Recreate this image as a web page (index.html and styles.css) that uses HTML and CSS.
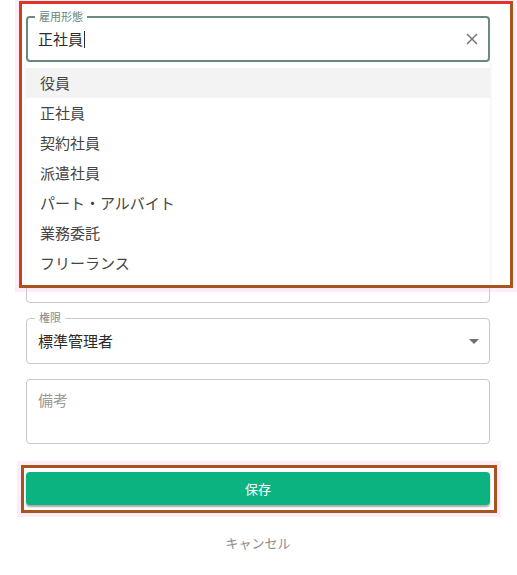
FILE: index.html
```html
<!DOCTYPE html>
<html lang="ja">
<head>
<meta charset="utf-8">
<title>雇用形態</title>
<link rel="stylesheet" href="styles.css">
</head>
<body>
<div class="page">
  <div class="fields">
    <div class="field focused">
      <span class="label label-focused">雇用形態</span>
      <span class="value">正社員</span><span class="caret"></span>
      <span class="spacer"></span>
      <svg class="clear" width="12" height="12" viewBox="0 0 12 12"><path d="M1 1 L11 11 M11 1 L1 11" stroke="#6f6f6f" stroke-width="1.4" fill="none"/></svg>
    </div>
    <div class="field plain"></div>
    <div class="field plain"></div>
    <div class="field plain"></div>
    <div class="field plain tall"></div>
    <div class="field select">
      <span class="label">権限</span>
      <span class="value">標準管理者</span>
      <span class="spacer"></span>
      <span class="arrow"></span>
    </div>
    <div class="field note">
      <span class="placeholder">備考</span>
    </div>
  </div>
  <button class="save">保存</button>
  <div class="cancel">キャンセル</div>

  <ul class="listbox">
    <li class="option active">役員</li>
    <li class="option">正社員</li>
    <li class="option">契約社員</li>
    <li class="option">派遣社員</li>
    <li class="option">パート・アルバイト</li>
    <li class="option">業務委託</li>
    <li class="option">フリーランス</li>
  </ul>
  <div class="mark mark-list"></div>
  <div class="mark mark-save"></div>
</div>
</body>
</html>
```

FILE: styles.css
```css
* { box-sizing: border-box; }
html, body { margin: 0; padding: 0; background: #ffffff; }
body {
  font-family: "Noto Sans CJK JP", "Noto Sans", sans-serif;
  color: #2b2b2b;
}
.page {
  position: relative;
  width: 517px;
  height: 575px;
  padding: 16px 27px 0 26px;
  display: flex;
  flex-direction: column;
}
.fields {
  display: flex;
  flex-direction: column;
  gap: 15px;
}
.field {
  position: relative;
  height: 46px;
  border: 1px solid #c9c9c9;
  border-radius: 4px;
  display: flex;
  align-items: center;
  padding: 0 10px 0 11px;
}
.field.focused {
  border: 2px solid #6a897f;
  padding: 0 10px 0 10px;
}
.field.plain { height: 45px; }
.field.plain.tall { height: 46px; }
.label {
  position: absolute;
  left: 8px;
  top: -9px;
  padding: 0 4px;
  background: #ffffff;
  font-size: 11px;
  line-height: 14px;
  color: #8a8a8a;
}
.label-focused { left: 7px; color: #6a897f; }
.value {
  font-size: 15px;
  line-height: 22px;
  color: #2b2b2b;
}
.caret {
  display: inline-block;
  width: 1px;
  height: 17px;
  background: #2b2b2b;
  margin-left: 1px;
}
.spacer { flex: 1; }
.clear { display: block; }
.arrow {
  width: 0;
  height: 0;
  border-left: 5px solid transparent;
  border-right: 5px solid transparent;
  border-top: 5px solid #6f6f6f;
}
.field.note {
  height: 65px;
  align-items: flex-start;
  padding-top: 9px;
}
.placeholder {
  font-size: 15px;
  line-height: 22px;
  color: #9a9a9a;
}
.save {
  margin: 28px 0 0 0;
  height: 33px;
  border: none;
  border-radius: 4px;
  background: #0bb381;
  color: #ffffff;
  font-family: inherit;
  font-size: 13px;
  box-shadow: 0 2px 2px rgba(0, 0, 0, 0.35);
  padding: 0;
}
.cancel {
  margin-top: 28px;
  text-align: center;
  font-size: 13px;
  line-height: 20px;
  color: #8c8c8c;
}
.listbox {
  position: absolute;
  top: 62px;
  left: 26px;
  width: 464px;
  margin: 0;
  padding: 6px 0 9px;
  list-style: none;
  background: #ffffff;
  box-shadow: 0 1px 3px rgba(0, 0, 0, 0.10);
}
.option {
  height: 30px;
  padding: 0 14px;
  display: flex;
  align-items: center;
  font-size: 15px;
  line-height: 20px;
  color: #444444;
}
.option.active { background: #f3f3f3; }
.mark {
  position: absolute;
  border: 3px solid #a9531f;
  box-shadow: 0 0 0 4px rgba(255, 200, 238, 0.35);
}
.mark-list {
  left: 19px;
  top: 1px;
  width: 494px;
  height: 287px;
  border-top-color: #e0352a;
  border-left-color: #c8401f;
}
.mark-save {
  left: 21px;
  top: 465px;
  width: 476px;
  height: 48px;
}
```
